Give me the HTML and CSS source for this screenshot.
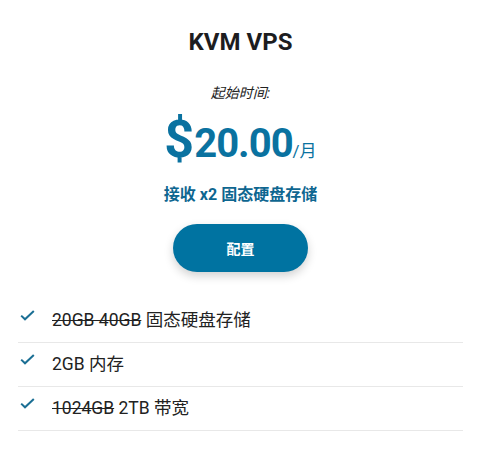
FILE: index.html
```html
<!DOCTYPE html>
<html lang="zh">
<head>
<meta charset="utf-8">
<link rel="stylesheet" href="styles.css">
</head>
<body>
<div class="card">
  <h1 class="title">KVM VPS</h1>
  <div class="start">起始时间:</div>
  <div class="price"><span class="cur">$</span><span class="amt">20.00</span><span class="per">/月</span></div>
  <div class="promo">接收 x2 固态硬盘存储</div>
  <div class="btn-wrap"><a class="btn">配置</a></div>
  <ul class="features">
    <li><span class="check"><svg width="15" height="11" viewBox="0 0 15 11"><path d="M1.2 5.6 L5 9.3 L13.8 1" fill="none" stroke="#1b6f94" stroke-width="2"/></svg></span><span><s>20GB 40GB</s> 固态硬盘存储</span></li>
    <li><span class="check"><svg width="15" height="11" viewBox="0 0 15 11"><path d="M1.2 5.6 L5 9.3 L13.8 1" fill="none" stroke="#1b6f94" stroke-width="2"/></svg></span><span>2GB 内存</span></li>
    <li><span class="check"><svg width="15" height="11" viewBox="0 0 15 11"><path d="M1.2 5.6 L5 9.3 L13.8 1" fill="none" stroke="#1b6f94" stroke-width="2"/></svg></span><span><s>1024GB</s> 2TB 带宽</span></li>
  </ul>
</div>
</body>
</html>
```
FILE: styles.css
```css
html, body { margin: 0; padding: 0; background: #fff; }
body { font-family: Roboto, "Noto Sans CJK SC", sans-serif; color: #222; }
.card { padding: 26px 15px 0 18px; }
.title { margin: 0; text-align: center; font-size: 24px; font-weight: 700; line-height: 32px; color: #1d1d1f; }
.start { margin-top: 26px; text-align: center; font-size: 14px; font-style: italic; line-height: 18px; color: #222; }
.price { margin-top: 10px; text-align: center; color: #0a72a0; font-weight: 700; line-height: 56px; white-space: nowrap; }
.cur { font-size: 52px; }
.amt { font-size: 40px; letter-spacing: -1px; }
.per { font-size: 17px; font-weight: 400; }
.promo { margin-top: 4px; text-align: center; color: #0e6690; font-size: 16px; font-weight: 700; line-height: 22px; }
.btn-wrap { display: flex; justify-content: center; margin-top: 18px; }
.btn { display: flex; align-items: center; justify-content: center; width: 135px; height: 48px; border-radius: 24px; background: #0073a1; color: #fff; font-size: 14px; font-weight: 700; box-shadow: 0 4px 10px rgba(0,0,0,0.18); }
.features { list-style: none; margin: 27px 0 0; padding: 0; }
.features li { box-sizing: border-box; display: flex; align-items: center; gap: 16px; height: 44px; padding-bottom: 4px; border-bottom: 1px solid #e8e8e8; font-size: 17.5px; color: #222; }
.check { display: flex; width: 16px; padding-left: 2px; margin-top: -6px; }
s { text-decoration: line-through; }
```
